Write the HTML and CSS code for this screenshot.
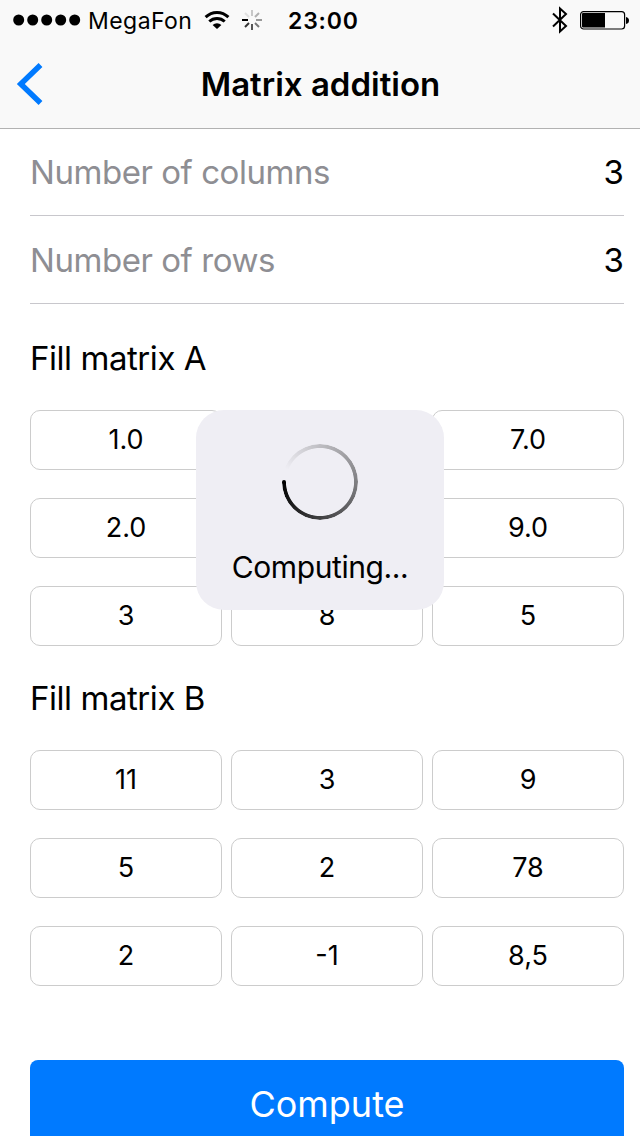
FILE: index.html
```html
<!DOCTYPE html>
<html lang="en">
<head>
<meta charset="utf-8">
<title>Matrix addition</title>
<link rel="stylesheet" href="styles.css">
</head>
<body>
<div class="screen">
  <header class="header">
    <div class="status">
      <svg class="signal" width="68" height="12" viewBox="0 0 68 12"><circle cx="5.7" cy="6" r="5.5"/><circle cx="19.7" cy="6" r="5.5"/><circle cx="33.7" cy="6" r="5.5"/><circle cx="47.7" cy="6" r="5.5"/><circle cx="61.7" cy="6" r="5.5"/></svg>
      <span class="carrier">MegaFon</span>
      <svg class="wifi" width="26" height="20" viewBox="0 0 26 20"><g fill="none" stroke="#000" stroke-width="3"><path d="M1.6 7.2Q6.5 2.5 13 2.5T24.400 7.200"/><path d="M5.300 11.500Q8.600 8.500 13 8.500T20.700 11.500"/></g><path d="M13 19L8.600 15Q10.500 13.200 13 13.200T17.400 15Z"/></svg>
      <svg class="activity" width="20" height="20" viewBox="-10 -10 20 20"><g fill="none" stroke-width="2"><path stroke="#000" d="M-10 0h6"/><path stroke="#333" d="M-7 7l4-4"/><path stroke="#555" d="M0 10v-6"/><path stroke="#777" d="M7 7l-4-4"/><path stroke="#999" d="M10 0h-6"/><path stroke="#b0b0b0" d="M7 -7l-4 4"/><path stroke="#c8c8c8" d="M0 -10v6"/><path stroke="#e0e0e0" d="M-7 -7l4 4"/></g></svg>
      <span class="time">23:00</span>
      <svg class="bluetooth" width="16" height="28" viewBox="0 0 16 28"><path fill="none" stroke="#000" stroke-width="2" d="M1 7.500L14 20L8 25.500V2.500L14 8L1 20.500"/></svg>
      <svg class="battery" width="50" height="20" viewBox="0 0 50 20"><rect x=".6" y="1.600" width="44" height="17.400" rx="3" fill="none" stroke="#000" stroke-width="1.200"/><path d="M2 4Q2 3 3 3H25V17.500H3Q2 17.500 2 16.500ZM46 7Q49 7.500 49 10.500T46 14Z"/></svg>
    </div>
    <nav class="navbar">
      <svg class="back" width="28" height="44" viewBox="0 0 28 44"><path fill="none" stroke="#007aff" stroke-width="5.500" d="M24.500 3L4.800 22L24.500 41"/></svg>
      <h1 class="title">Matrix addition</h1>
    </nav>
  </header>
  <main class="content">
    <div class="row row-first"><span class="label">Number of columns</span><span class="value">3</span></div>
    <div class="row"><span class="label">Number of rows</span><span class="value">3</span></div>
    <h2 class="heading heading-a">Fill matrix A</h2>
    <div class="matrix">
      <div class="cell">1.0</div><div class="cell"></div><div class="cell">7.0</div>
      <div class="cell">2.0</div><div class="cell"></div><div class="cell">9.0</div>
      <div class="cell">3</div><div class="cell">8</div><div class="cell">5</div>
    </div>
    <h2 class="heading">Fill matrix B</h2>
    <div class="matrix">
      <div class="cell">11</div><div class="cell">3</div><div class="cell">9</div>
      <div class="cell">5</div><div class="cell">2</div><div class="cell">78</div>
      <div class="cell">2</div><div class="cell">-1</div><div class="cell">8,5</div>
    </div>
    <div class="compute">Compute</div>
  </main>
  <div class="hud">
    <div class="spinner"><div class="ring"></div><div class="cap"></div></div>
    <div class="hud-text">Computing...</div>
  </div>
</div>
</body>
</html>
```
FILE: styles.css
```css
* { box-sizing: border-box; }
body { margin: 0; background: #fff; color: #000; font-family: Inter, "Liberation Sans", sans-serif; }
svg { display: block; flex: none; }
.screen { position: relative; width: 640px; height: 1136px; overflow: hidden; }
.header { height: 129px; background: #f9f9f9; border-bottom: 1px solid #b2b2b2; }
.status { display: flex; align-items: center; height: 40px; padding-left: 13px; }
.carrier { width: 101px; margin-left: 7px; padding-top: 2px; font-size: 23px; letter-spacing: 0.45px; white-space: nowrap; }
.wifi { margin-left: 15px; }
.activity { margin-left: 12px; }
.time { width: 72px; margin-left: 26px; padding-top: 2px; font-size: 23px; font-weight: 600; letter-spacing: 0.8px; white-space: nowrap; }
.bluetooth { margin-left: 192px; }
.battery { margin-left: 12px; }
.navbar { display: grid; grid-template-columns: 60px 1fr 60px; align-items: center; height: 88px; }
.back { margin-left: 16px; }
.title { margin: 0; padding-left: 1px; font-size: 33px; font-weight: 600; text-align: center; letter-spacing: 0; }
.content { padding: 0 16px 0 30px; }
.row { display: flex; justify-content: space-between; align-items: center; height: 88px; border-bottom: 1px solid #c8c7cc; font-size: 33px; }
.row-first { height: 87px; }
.label { color: #8e8e93; letter-spacing: -0.45px; }
.heading { display: flex; align-items: center; height: 104px; margin: 0; font-size: 33px; font-weight: 400; letter-spacing: -0.45px; }
.heading-a { height: 106px; padding-top: 2px; }
.matrix { display: grid; grid-template-columns: repeat(3, 192px); column-gap: 9px; row-gap: 28px; }
.cell { display: flex; align-items: center; justify-content: center; height: 60px; padding-bottom: 2px; border: 1px solid #ccc; border-radius: 10px; font-size: 27px; }
.compute { display: flex; align-items: center; justify-content: center; height: 88px; margin-top: 74px; border-radius: 8px; background: #007aff; color: #fff; font-size: 36px; }
.hud { position: absolute; left: 196px; top: 410px; width: 248px; height: 200px; padding-top: 34px; border-radius: 28px; background: #efeef4; }
.spinner { position: relative; width: 76px; height: 76px; margin: 0 auto; }
.ring { height: 76px; border-radius: 50%; background: conic-gradient(from 291deg, rgba(0, 0, 0, 0), #000 339deg, rgba(0, 0, 0, 0) 339deg); -webkit-mask: radial-gradient(circle, transparent 33.6px, #000 34.4px); mask: radial-gradient(circle, transparent 33.6px, #000 34.4px); }
.cap { position: absolute; left: 0; top: 36px; width: 4px; height: 4px; border-radius: 50%; background: #000; }
.hud-text { margin-top: 27px; font-size: 30px; line-height: 40px; text-align: center; letter-spacing: -0.4px; }
```
